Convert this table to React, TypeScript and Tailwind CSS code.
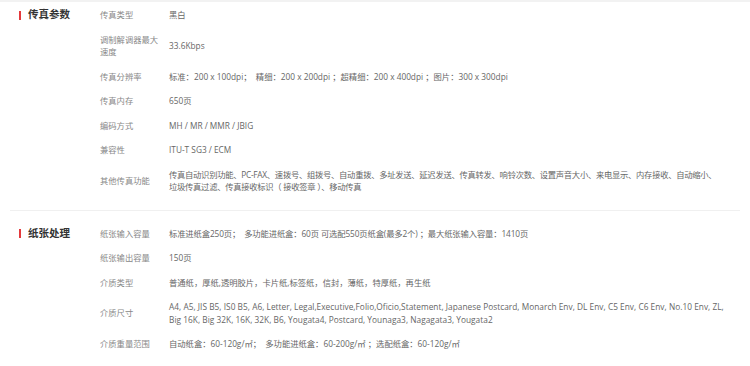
import React from "react";

type Row = { label: React.ReactNode; value: React.ReactNode; cls?: string };

const fax: Row[] = [
  { label: "传真类型", value: "黑白" },
  { label: <>调制解调器最大<br />速度</>, value: "33.6Kbps" },
  {
    label: "传真分辨率",
    value: "标准：200 x 100dpi；  精细：200 x 200dpi ；超精细：200 x 400dpi ；图片：300 x 300dpi",
  },
  { label: "传真内存", value: "650页" },
  { label: "编码方式", value: "MH / MR / MMR / JBIG" },
  { label: "兼容性", value: "ITU-T SG3 / ECM" },
  {
    label: "其他传真功能",
    cls: "tracking-[-0.27px]",
    value: (
      <>
        传真自动识别功能、PC-FAX、速拨号、组拨号、自动重拨、多址发送、延迟发送、传真转发、响铃次数、设置声音大小、来电显示、内存接收、自动缩小、
        <br />
        垃圾传真过滤、传真接收标识（ 接收签章 ）、移动传真
      </>
    ),
  },
];

const paper: Row[] = [
  {
    label: "纸张输入容量",
    cls: "tracking-[-0.12px]",
    value: "标准进纸盒250页；  多功能进纸盒：60页 可选配550页纸盒(最多2个) ；最大纸张输入容量：1410页",
  },
  { label: "纸张输出容量", value: "150页" },
  { label: "介质类型", value: "普通纸，厚纸,透明胶片，卡片纸,标签纸，信封，薄纸，特厚纸，再生纸" },
  {
    label: "介质尺寸",
    cls: "tracking-[0.03px]",
    value: (
      <>
        A4, A5, JIS B5, IS0 B5, A6, Letter, Legal,Executive,Folio,Oficio,Statement, Japanese Postcard, Monarch Env, DL Env, C5 Env, C6 Env, No.10 Env, ZL,
        <br />
        Big 16K, Big 32K, 16K, 32K, B6, Yougata4, Postcard, Younaga3, Nagagata3, Yougata2
      </>
    ),
  },
  {
    label: "介质重量范围",
    value: "自动纸盒：60-120g/㎡；  多功能进纸盒：60-200g/㎡ ；选配纸盒：60-120g/㎡",
  },
];

function Section({ title, rows, className }: { title: string; rows: Row[]; className: string }) {
  return (
    <section className={"flex " + className}>
      <div className="w-[100px] shrink-0 pl-[19px]">
        <div className="flex h-[24.5px] items-center">
          <span className="mr-[7px] inline-block h-[9px] w-[2px] bg-[#e4393c]" />
          <span className="text-[10.5px] font-bold text-[#333]">{title}</span>
        </div>
      </div>
      <div className="flex-1">
        {rows.map((r, i) => (
          <div key={i} className="flex items-center py-[6px] leading-[12.5px]">
            <div className="w-[69px] shrink-0 text-[#888]">{r.label}</div>
            <div className={"whitespace-pre text-[#666] " + (r.cls ?? "")}>{r.value}</div>
          </div>
        ))}
      </div>
    </section>
  );
}

export default function App() {
  return (
    <div
      className="h-[366px] w-[750px] overflow-hidden border-t-2 border-[#f2f2f2] bg-white text-[8.3px]"
      style={{ fontFamily: '"Open Sans", "Noto Sans CJK SC", sans-serif' }}
    >
      <Section title="传真参数" rows={fax} className="pt-[1px] pb-[10px]" />
      <div className="mx-[10px] h-px bg-[#f0f0f0]" />
      <Section title="纸张处理" rows={paper} className="pt-[11px]" />
    </div>
  );
}
